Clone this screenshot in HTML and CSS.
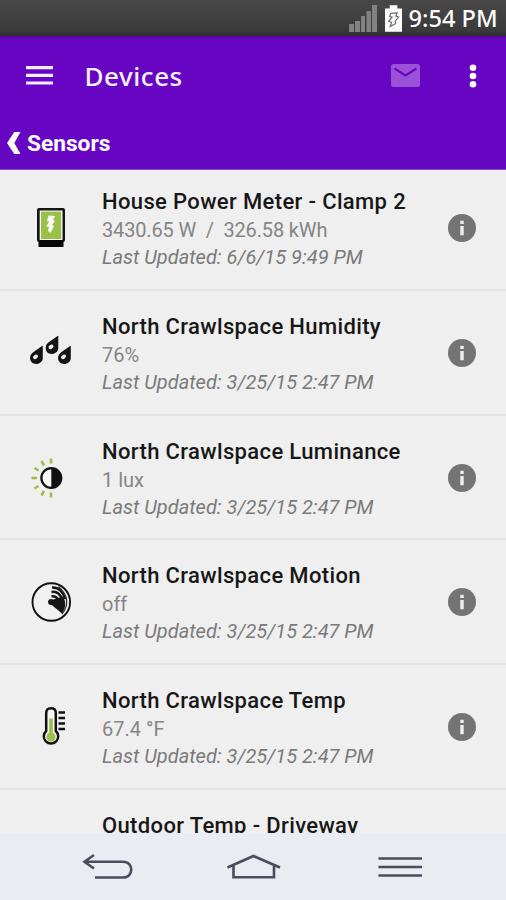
FILE: index.html
```html
<!DOCTYPE html>
<html lang="en">
<head>
<meta charset="utf-8">
<title>Devices</title>
<link rel="stylesheet" href="styles.css">
</head>
<body>
<svg class="defs" aria-hidden="true">
  <symbol id="info" viewBox="0 0 28 28"><circle cx="14" cy="14" r="14" fill="#747474"/><path d="M14 12V21.300M14 6.800V10" stroke="#eee" stroke-width="3.400"/></symbol>
  <symbol id="drop" viewBox="0 0 14 19"><path d="M12.800 0V12.500C12.800 16 9.500 18.500 6.200 18.500C2.500 18.500 0 15.500 0 12.500C0 10 1.500 7.800 3.500 6.500Z" fill="#151515"/><ellipse cx="5.500" cy="11.300" rx="2.700" ry="2" transform="rotate(-35 5.500 11.300)" fill="#eee"/></symbol>
</svg>
<div class="screen">
  <div class="status">
    <svg class="signal" viewBox="0 0 28 28"><path d="M0 20h5v8H0zM6 17h5v11H6zM12 12h4v16h-4zM17.500 7h4.500v21h-4.500zM23 1h5v27h-5z" fill="#828282"/></svg>
    <svg class="battery" viewBox="0 0 18 28"><path d="M5 0h8v3.500h5V28H0V3.500h5z" fill="#fff"/><path d="M6 8.500L13 8L11.500 11.500L14.500 12.500L11 16.500V19.500L5.500 22.500L7 18L4 17L7.500 12.500L5 12Z" fill="none" stroke="#666" stroke-width="1.200"/></svg>
    <span class="clock">9:54 PM</span>
  </div>
  <header class="header">
    <div class="toolbar">
      <svg class="menu" viewBox="0 0 27 19"><path d="M0 1.700H27M0 9.300H27M0 17H27" stroke="#f4edff" stroke-width="3.200"/></svg>
      <h1>Devices</h1>
      <svg class="mail" viewBox="0 0 29 23"><rect width="29" height="23" rx="2.500" fill="#9b50d8"/><path d="M3.500 4.500L14.500 11.500L25.500 4.500" fill="none" stroke="#6a07c3" stroke-width="2.200"/></svg>
      <svg class="more" viewBox="0 0 8 24"><g fill="#fff"><circle cx="4" cy="3.700" r="3.300"/><circle cx="4" cy="12" r="3.300"/><circle cx="4" cy="20.300" r="3.300"/></g></svg>
    </div>
    <div class="back">
      <svg viewBox="0 0 14 22"><path d="M7.300 0H13.500L7.300 11L13.500 22H7.300L0 11Z" fill="#fff"/></svg>
      <span>Sensors</span>
    </div>
  </header>
  <main class="list">
    <div class="row">
      <svg class="icon" viewBox="0 0 100 60"><rect x="37" y="10" width="28" height="34" rx="2" fill="#151515"/><rect x="38.500" y="42" width="25" height="7" fill="#080808"/><rect x="39.700" y="12.500" width="22.800" height="29.500" fill="#fff"/><rect x="41" y="13.500" width="20.200" height="27.500" fill="#9bc047"/><path d="M48.500 17.500L55 18L53 22L55 23L52 27L54 28L50.500 35L48 33L49 29.500L46.500 28L49 24L47 23Z" fill="#fff"/></svg>
      <div class="text"><h2>House Power Meter - Clamp 2</h2><p class="value wide">3430.65 W &nbsp;/&nbsp; 326.58 kWh</p><p class="date">Last Updated: 6/6/15 9:49 PM</p></div>
      <svg class="info"><use href="#info"/></svg>
    </div>
    <div class="row">
      <svg class="icon" viewBox="0 0 100 60"><use href="#drop" x="30" y="22.500" width="14" height="19"/><use href="#drop" x="45.500" y="12.500" width="14" height="19"/><use href="#drop" x="58" y="22.500" width="14" height="19"/></svg>
      <div class="text"><h2>North Crawlspace Humidity</h2><p class="value">76%</p><p class="date">Last Updated: 3/25/15 2:47 PM</p></div>
      <svg class="info"><use href="#info"/></svg>
    </div>
    <div class="row">
      <svg class="icon" viewBox="0 0 100 60"><circle cx="51.300" cy="30" r="9.900" fill="#f7f7f7" stroke="#111" stroke-width="2.300"/><path d="M51.300 20A10 10 0 0 1 51.300 40Z" fill="#111"/><path d="M51 10.500V15.500M41.500 13L44 17.500M34.500 20L38.500 22.500M31.500 30H37M34.500 40.500L38.500 38M41.500 47.500L44 43M51 44.500V49.500" stroke="#a2bc46" stroke-width="2.600"/></svg>
      <div class="text"><h2>North Crawlspace Luminance</h2><p class="value">1 lux</p><p class="date">Last Updated: 3/25/15 2:47 PM</p></div>
      <svg class="info"><use href="#info"/></svg>
    </div>
    <div class="row">
      <svg class="icon" viewBox="0 0 100 60"><circle cx="51.300" cy="30" r="18.800" fill="#f1f1f1" stroke="#111" stroke-width="1.900"/><path d="M52 28L63 24.500Q68 33 62 41.500L50 31.500Z" fill="#151515"/><circle cx="51" cy="30" r="2.900" fill="#111"/><path d="M51.500 24.500Q56 23.500 59 29M51.500 20Q58.500 18.500 62 27M52 15.500Q62 15 65 27" fill="none" stroke="#151515" stroke-width="2.500"/><path d="M58.500 14.500Q73 28 62 42" fill="none" stroke="#333" stroke-width="1.300"/></svg>
      <div class="text"><h2>North Crawlspace Motion</h2><p class="value">off</p><p class="date">Last Updated: 3/25/15 2:47 PM</p></div>
      <svg class="info"><use href="#info"/></svg>
    </div>
    <div class="row">
      <svg class="icon" viewBox="0 0 100 60"><path d="M46.200 34V16Q46.200 11.300 51 11.300Q55.800 11.300 55.800 16V34A7.200 7.200 0 1 1 46.200 34Z" fill="#f6f6f6" stroke="#111" stroke-width="2.500"/><path d="M51 21.500V40" stroke="#9bc047" stroke-width="3.600"/><circle cx="51" cy="40" r="4.600" fill="#9bc047"/><path d="M58.500 15.500H65M58.500 21H65M58.500 26.500H65M58.500 32H65" stroke="#111" stroke-width="2.400"/></svg>
      <div class="text"><h2>North Crawlspace Temp</h2><p class="value">67.4 °F</p><p class="date">Last Updated: 3/25/15 2:47 PM</p></div>
      <svg class="info"><use href="#info"/></svg>
    </div>
    <div class="row">
      <svg class="icon" viewBox="0 0 100 60"><path d="M46.200 35V17Q46.200 12.300 51 12.300Q55.800 12.300 55.800 17V35A7.200 7.200 0 1 1 46.200 35Z" fill="#f6f6f6" stroke="#555" stroke-width="2"/></svg>
      <div class="text"><h2>Outdoor Temp - Driveway</h2></div>
    </div>
  </main>
  <nav class="nav">
    <svg viewBox="0 0 506 67" fill="none" stroke="#4a4e5a" stroke-width="2.600"><path d="M94 22L84.500 28.700L94 35.500M85 28.700H123C134 28.700 134 44.500 123 44.500H95"/><path d="M227.500 34.500L253.500 23L280 34.500M233.500 33V44.300H274V33"/><path d="M378.500 25.500H422M378.500 34H422M378.500 42.500H422"/></svg>
  </nav>
</div>
</body>
</html>
```

FILE: styles.css
```css
* { box-sizing: border-box; margin: 0; }
body { background: #efefef; font-family: Roboto, sans-serif; }
.defs { display: none; }
.screen { width: 506px; height: 900px; display: flex; flex-direction: column; overflow: hidden; }
.status { height: 36px; flex: none; display: flex; align-items: center; padding-left: 348.500px; background: linear-gradient(#484848, #393939 88%, #2c2c2c); }
.signal { width: 28px; height: 28px; }
.battery { width: 17px; height: 27px; margin-left: 8px; }
.clock { margin-left: 7px; font: 500 23.600px/36px "Noto Sans", sans-serif; color: #fff; white-space: nowrap; }
.header { height: 134px; flex: none; background: linear-gradient(#5c06ad, #6706c2 5px); border-bottom: 1px solid #8950c6; }
.toolbar { height: 79px; display: flex; align-items: center; padding-left: 26px; }
.menu { width: 27px; height: 19px; flex: none; }
h1 { margin-left: 31.500px; width: 275px; flex: none; font: 500 26px/36px "Noto Sans", sans-serif; letter-spacing: .55px; color: #f6f0ff; }
.mail { width: 29px; height: 23px; flex: none; margin-left: 31px; }
.more { width: 8px; height: 24px; flex: none; margin-left: 49px; }
.back { height: 54px; display: flex; align-items: center; padding: 2px 0 0 7px; gap: 6px; color: #fff; font-size: 22.700px; font-weight: 700; }
.back svg { width: 14px; height: 22px; }
.list { flex: 1; min-height: 0; overflow: hidden; }
.row { height: 124.700px; display: flex; align-items: flex-start; padding-top: 22px; border-bottom: 2px solid #e4e4e4; }
.row:first-child { height: 121px; padding-top: 18.400px; }
.icon { width: 100px; height: 60px; flex: none; margin-top: 10px; }
.text { width: 347.500px; flex: none; padding-left: 2px; white-space: nowrap; }
h2 { font-size: 22px; line-height: 28px; font-weight: 500; letter-spacing: .36px; color: #171717; }
.value { font-size: 20px; line-height: 29px; color: #858585; }
.wide { letter-spacing: -.15px; }
.date { font-size: 20px; line-height: 25px; font-style: italic; color: #7a7a7a; }
.info { width: 28px; height: 28px; flex: none; margin-top: 26px; }
.nav { height: 67px; flex: none; background: #e9ecf0; }
.nav svg { display: block; width: 506px; height: 67px; }
```
